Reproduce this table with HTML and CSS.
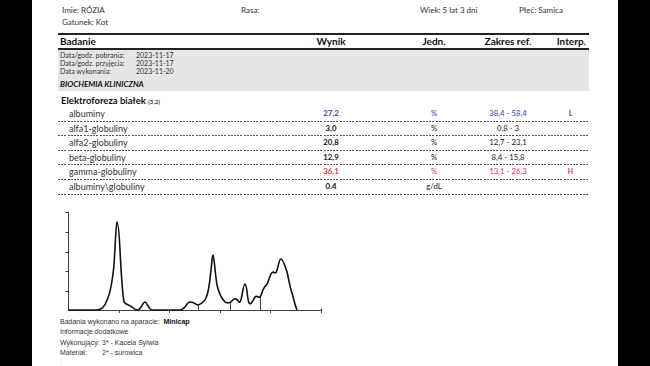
FILE: index.html
```html
<!DOCTYPE html>
<html lang="pl">
<head>
<meta charset="utf-8">
<title>Wynik badania</title>
<link rel="stylesheet" href="styles.css">
</head>
<body>
<div class="page">
  <div class="info">
    <span>Imie: RÓZIA</span>
    <span>Rasa:</span>
    <span>Wiek: 5 lat 3 dni</span>
    <span>Płeć: Samica</span>
  </div>
  <div class="info">
    <span>Gatunek: Kot</span>
  </div>

  <div class="thead">
    <span class="c-name">Badanie</span>
    <span class="c-res">Wynik</span>
    <span class="c-unit">Jedn.</span>
    <span class="c-ref">Zakres ref.</span>
    <span class="c-int">Interp.</span>
  </div>

  <div class="meta">
    <div class="meta-row"><span>Data/godz. pobrania:</span><span>2023-11-17</span></div>
    <div class="meta-row"><span>Data/godz. przyjęcia:</span><span>2023-11-17</span></div>
    <div class="meta-row"><span>Data wykonania:</span><span>2023-11-20</span></div>
    <div class="meta-section">BIOCHEMIA KLINICZNA</div>
  </div>

  <div class="group">Elektroforeza białek <small>(3,2)</small></div>

  <div class="row low">
    <span class="c-name">albuminy</span>
    <span class="c-res">27,2</span>
    <span class="c-unit">%</span>
    <span class="c-ref">38,4 - 58,4</span>
    <span class="c-int">L</span>
  </div>
  <div class="row">
    <span class="c-name">alfa1-globuliny</span>
    <span class="c-res">3,0</span>
    <span class="c-unit">%</span>
    <span class="c-ref">0,8 - 3</span>
    <span class="c-int"></span>
  </div>
  <div class="row">
    <span class="c-name">alfa2-globuliny</span>
    <span class="c-res">20,8</span>
    <span class="c-unit">%</span>
    <span class="c-ref">12,7 - 23,1</span>
    <span class="c-int"></span>
  </div>
  <div class="row">
    <span class="c-name">beta-globuliny</span>
    <span class="c-res">12,9</span>
    <span class="c-unit">%</span>
    <span class="c-ref">8,4 - 15,8</span>
    <span class="c-int"></span>
  </div>
  <div class="row high">
    <span class="c-name">gamma-globuliny</span>
    <span class="c-res">36,1</span>
    <span class="c-unit">%</span>
    <span class="c-ref">13,1 - 26,3</span>
    <span class="c-int">H</span>
  </div>
  <div class="row">
    <span class="c-name">albuminy\globuliny</span>
    <span class="c-res">0.4</span>
    <span class="c-unit">g/dL</span>
    <span class="c-ref"></span>
    <span class="c-int"></span>
  </div>

  <svg class="chart" width="270" height="112" viewBox="60 205 270 112">
    <g stroke="#444" stroke-width="1" fill="none">
      <line x1="68.5" y1="212" x2="68.5" y2="310.5"/>
      <line x1="68" y1="310.5" x2="321.5" y2="310.5"/>
      <line x1="65.5" y1="212.5" x2="68.5" y2="212.5"/>
      <line x1="65.5" y1="232.5" x2="68.5" y2="232.5"/>
      <line x1="65.5" y1="252.5" x2="68.5" y2="252.5"/>
      <line x1="65.5" y1="271.5" x2="68.5" y2="271.5"/>
      <line x1="65.5" y1="291.5" x2="68.5" y2="291.5"/>
      <line x1="119.5" y1="310.5" x2="119.5" y2="313"/>
      <line x1="169.5" y1="310.5" x2="169.5" y2="313"/>
      <line x1="220.5" y1="310.5" x2="220.5" y2="313"/>
      <line x1="270.5" y1="310.5" x2="270.5" y2="313"/>
      <line x1="321.5" y1="308.5" x2="321.5" y2="313"/>
      <line x1="198.5" y1="310.5" x2="198.5" y2="305"/>
      <line x1="230.5" y1="310.5" x2="230.5" y2="302"/>
      <line x1="260.5" y1="310.5" x2="260.5" y2="297"/>
    </g>
    <path fill="none" stroke="#111" stroke-width="1.6" stroke-linejoin="round" d="M68,310 L97,310 C102,310 105,306 107,300 C110,294 112,285 114,265 C115,250 116,223 117,222 C118,222 119,230 120,250 C121,270 122,290 124,302 C126,305 129,305 132,307 C134,309 136,310 138,310 C141,309 143,302 145,302 C147,302 149,310 152,310 L180,310 C184,310 186,305 188,303 C190,301 192,302 194,303 C196,304 197,305 198,305 C201,304 204,302 206,298 C209,292 210,280 211,270 C212,262 212,255 213,255 C214,256 215,272 217,285 C219,294 222,299 225,302 C227,303 229,303 231,302 C233,300 234,298 236,299 C238,300 239,303 240,302 C242,300 243,284 245,284 C247,284 247,298 249,303 C251,306 253,300 255,297 C257,295 258,298 260,297 C262,295 262,290 264,288 C266,285 267,285 268,282 C270,276 271,272 273,272 C275,273 276,274 277,270 C279,264 279,259 281,259 C283,259 285,266 287,272 C289,280 290,288 292,293 C294,300 295,305 297,310"/>
  </svg>

  <div class="foot">
    <div>Badania wykonano na aparacie: &nbsp;<b>Minicap</b></div>
    <div>Informacje dodatkowe</div>
    <div class="foot-row"><span>Wykonujący:</span><span>3* - Kacela Sylwia</span></div>
    <div class="foot-row"><span>Materiał:</span><span>2* - surowica</span></div>
    <div class="dot">.</div>
  </div>
</div>
</body>
</html>
```

FILE: styles.css
```css
html, body {
  margin: 0;
  padding: 0;
}
body {
  background: #000;
  display: flex;
  justify-content: center;
  height: 366px;
  overflow: hidden;
}
.page {
  width: 586px;
  height: 366px;
  background: #fff;
  box-sizing: border-box;
  padding: 4px 29px 0 26px;
  font-family: Lato, "Noto Sans", sans-serif;
  color: #222;
}
.info {
  display: grid;
  grid-template-columns: 179px 179px 99px auto;
  padding-left: 4px;
  height: 12px;
  line-height: 12px;
  font-size: 8px;
  color: #333;
}
.thead {
  margin-top: 5px;
  display: grid;
  grid-template-columns: 240px 66px 40px 60px 88px 37px;
  border-top: 2px solid #222;
  border-bottom: 2px solid #222;
  height: 13px;
  line-height: 13px;
  font-size: 10px;
  font-weight: 700;
  color: #111;
}
.c-name { grid-column: 1; padding-left: 2px; }
.c-res { grid-column: 2; text-align: center; }
.c-unit { grid-column: 4; text-align: center; }
.c-ref { grid-column: 5; text-align: center; }
.c-int { grid-column: 6; text-align: center; }
.thead .c-int { text-align: right; padding-right: 3px; }

.meta {
  background: #e6e6e6;
  padding: 1px 2px 2px;
  color: #333;
}
.meta-row {
  display: grid;
  grid-template-columns: 76px auto;
  height: 8px;
  line-height: 8px;
  font-size: 7px;
}
.meta-section {
  margin-top: 4px;
  height: 10px;
  line-height: 10px;
  font-size: 8px;
  font-weight: 700;
  font-style: italic;
  color: #111;
}
.group {
  margin-top: 3px;
  height: 13px;
  line-height: 13px;
  padding-left: 3px;
  font-size: 9.5px;
  font-weight: 700;
  color: #111;
}
.group small {
  font-size: 6px;
  color: #444;
}
.row {
  display: grid;
  grid-template-columns: 240px 66px 40px 60px 88px 37px;
  height: 14.6px;
  line-height: 13.6px;
  box-sizing: border-box;
  background: repeating-linear-gradient(to right, #555 0 2px, transparent 2px 3.2px) left bottom / 100% 1px no-repeat;
  font-size: 7.8px;
  color: #222;
}
.row .c-name {
  padding-left: 11px;
  font-size: 9px;
  color: #333;
}
.row .c-res {
  font-weight: 700;
  color: #111;
}
.row .c-int {
  font-weight: 700;
  font-size: 7px;
}
.row.low .c-res, .row.low .c-unit, .row.low .c-ref, .row.low .c-int {
  color: #3b3bc0;
}
.row.high .c-res, .row.high .c-unit, .row.high .c-ref, .row.high .c-int {
  color: #e2334f;
}
.chart {
  display: block;
  margin: 10px 0 0 2px;
}
.foot {
  padding-left: 2px;
  font-family: "Liberation Sans", Arial, sans-serif;
  font-size: 7px;
  line-height: 10.6px;
  color: #333;
}
.foot b {
  color: #111;
}
.foot-row {
  display: grid;
  grid-template-columns: 42px auto;
}
.dot {
  line-height: 8px;
  color: #888;
}
```
